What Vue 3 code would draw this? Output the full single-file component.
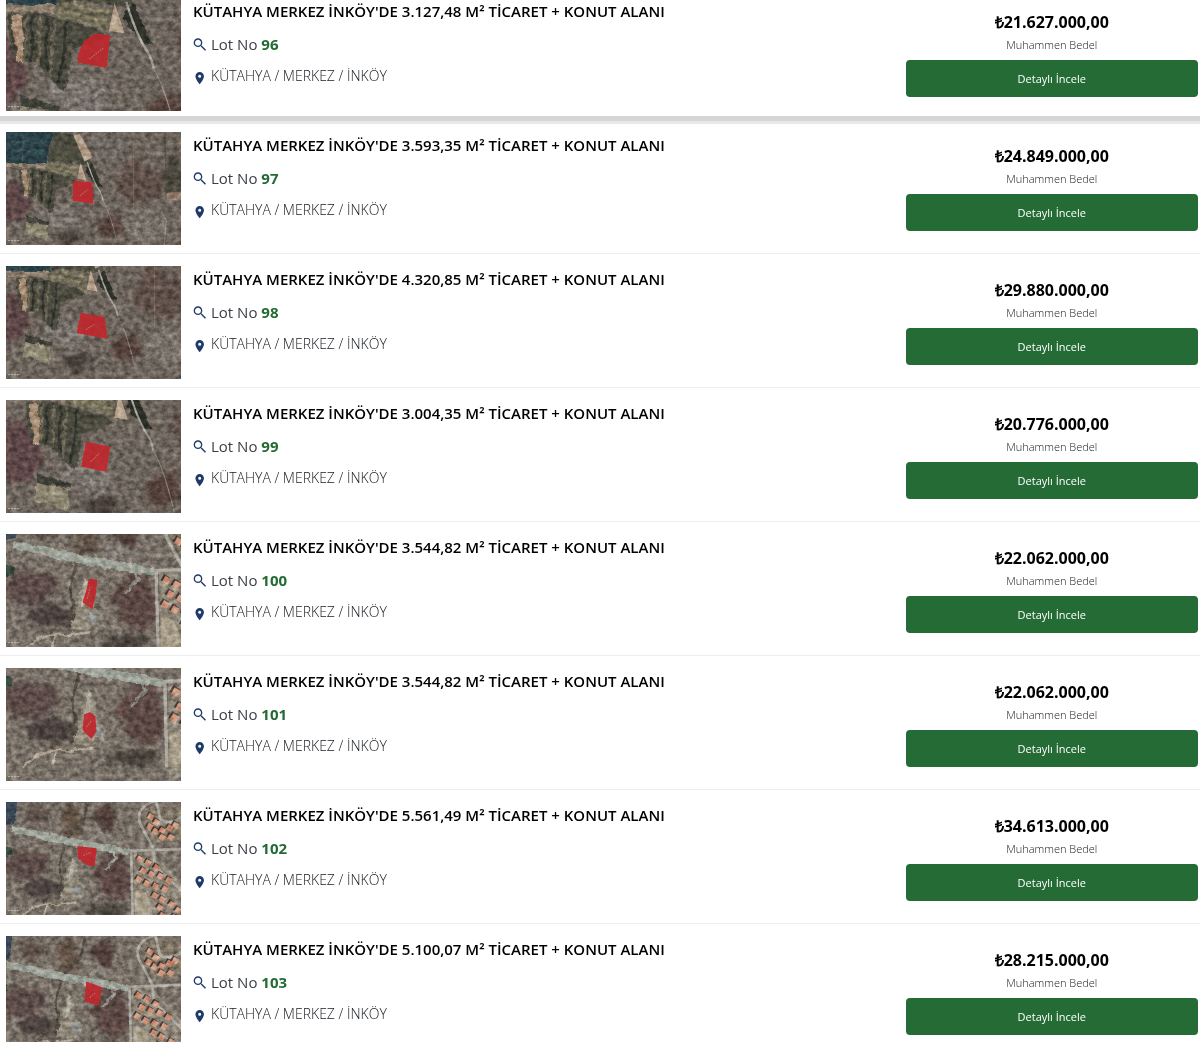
<template>
  <!-- Shared drawings for the lot thumbnails -->
  <svg class="defs" aria-hidden="true">
    <defs>
      <filter id="grain" x="0" y="0" width="100%" height="100%" color-interpolation-filters="sRGB">
        <feTurbulence type="fractalNoise" baseFrequency="0.06 0.07" numOctaves="5" seed="8" />
        <feColorMatrix values="0 0 0 0.5 0.26  0 0 0 0.5 0.26  0 0 0 0.5 0.25  0 0 0 0 1" />
      </filter>
      <filter id="rough" x="-10%" y="-10%" width="120%" height="120%" color-interpolation-filters="sRGB">
        <feTurbulence type="fractalNoise" baseFrequency="0.05" numOctaves="3" seed="3" result="n" />
        <feDisplacementMap in="SourceGraphic" in2="n" scale="14" xChannelSelector="R" yChannelSelector="G" />
        <feGaussianBlur stdDeviation="1" />
      </filter>
      <filter id="soft" x="-20%" y="-20%" width="140%" height="140%" color-interpolation-filters="sRGB">
        <feTurbulence type="fractalNoise" baseFrequency="0.02" numOctaves="4" seed="5" result="n" />
        <feGaussianBlur in="SourceGraphic" stdDeviation="6" result="b" />
        <feDisplacementMap in="b" in2="n" scale="50" xChannelSelector="R" yChannelSelector="G" />
      </filter>

      <g id="fields">
        <rect x="-200" y="-200" width="1000" height="800" fill="#6b635d" />
        <g filter="url(#soft)">
          <ellipse cx="20" cy="210" rx="50" ry="60" fill="#5c4648" />
          <ellipse cx="400" cy="150" rx="70" ry="60" fill="#5d4e49" />
          <ellipse cx="310" cy="285" rx="45" ry="30" fill="#54413c" />
          <ellipse cx="190" cy="315" rx="40" ry="22" fill="#463d39" />
          <ellipse cx="415" cy="280" rx="60" ry="45" fill="#77706b" />
          <ellipse cx="500" cy="130" rx="30" ry="60" fill="#49453c" />
          <ellipse cx="160" cy="245" rx="55" ry="35" fill="#77716d" />
          <ellipse cx="310" cy="35" rx="50" ry="35" fill="#6c6662" />
        </g>
        <g filter="url(#rough)">
          <path d="M-10 -10H145L122 95L-10 92Z" fill="#2a4047" />
          <path d="M20 30H125M15 55H120M50 0V90" stroke="#3b5057" stroke-width="5" />
          <path d="M-10 92L122 94L120 108L-10 108Z" fill="#8a7b6d" />
          <path d="M145 0L200 8L258 92L225 98L205 90L125 92Z" fill="#4b4b40" />
          <path d="M125 92L215 100L218 142L120 112Z" fill="#6f6a58" />
          <path d="M130 105L210 122M150 95L215 108" stroke="#827a65" stroke-width="4" />
          <path d="M40 110L120 113L215 148L150 175L138 245L112 225L90 192L45 188Z" fill="#4a493f" />
          <path d="M70 112V190M95 115V200M122 120L112 225" stroke="#666153" stroke-width="5" />
          <path d="M82 115V190M108 118V208M140 125L130 230" stroke="#30332d" stroke-width="6" />
          <path d="M48 112L64 112L68 192L56 192Z" fill="#a48a75" />
          <path d="M64 253L130 268L128 280L62 266Z" fill="#3d3f38" />
          <path d="M62 266L126 283L122 324L56 302Z" fill="#8a8471" />
          <path d="M256 90L290 165L272 160L238 118Z" fill="#2d3029" />
        </g>
        <path d="M203 12L222 6L260 74L236 88Z" fill="#ab9784" />
        <path d="M224 92L241 144L214 140Z" fill="#b5a18d" />
        <path d="M244 90Q262 150 282 178Q288 188 291 205" fill="none" stroke="#a39e98" stroke-width="4" />
        <path d="M291 205Q312 240 332 325" fill="none" stroke="#8b857f" stroke-width="2" />
        <path d="M382 0V250" fill="none" stroke="#8c7560" stroke-width="3" opacity="0.5" />
        <path d="M475 0L482 170L525 176" fill="none" stroke="#4a4840" stroke-width="5" opacity="0.7" />
        <path d="M474 338L480 265L466 240" fill="none" stroke="#a29d95" stroke-width="4" opacity="0.6" />
        <path d="M480 182L530 178V202L482 205Z" fill="#8f786a" />
      </g>

      <g id="hills">
        <rect x="-200" y="-200" width="1000" height="800" fill="#766e67" />
        <g filter="url(#soft)">
          <ellipse cx="60" cy="190" rx="65" ry="45" fill="#5b4b49" />
          <ellipse cx="325" cy="220" rx="52" ry="75" fill="#5a4744" />
          <ellipse cx="115" cy="262" rx="60" ry="30" fill="#4b413f" />
          <ellipse cx="300" cy="45" rx="28" ry="38" fill="#503f3c" />
          <ellipse cx="195" cy="55" rx="28" ry="50" fill="#615146" />
          <ellipse cx="100" cy="40" rx="40" ry="25" fill="#5d504b" />
          <ellipse cx="300" cy="325" rx="60" ry="20" fill="#46403b" />
          <ellipse cx="285" cy="100" rx="45" ry="16" fill="#837c77" />
        </g>
        <g filter="url(#rough)">
          <path d="M-10 -10H35L28 65L-10 75Z" fill="#374352" />
          <path d="M-10 130L20 135L20 160L-10 165Z" fill="#34443b" />
          <path d="M240 0Q250 60 185 105Q150 200 170 230Q160 270 110 300" fill="none" stroke="#524d46" stroke-width="8" />
          <path d="M130 40Q150 120 145 150L160 180" fill="none" stroke="#8c837a" stroke-width="6" opacity="0.7" />
          <path d="M198 165L214 190L216 235L240 255L228 290L160 295L175 255L184 195Z" fill="#8f877b" />
          <path d="M198 165L206 190L200 230L188 240L190 195Z" fill="#aaa69b" />
          <path d="M205 240L238 258L222 285L198 268Z" fill="#858584" />
          <path d="M320 145L330 165L298 205" fill="none" stroke="#8a8984" stroke-width="7" />
          <path d="M45 345Q85 300 150 308L210 300M122 308L115 338" fill="none" stroke="#b0a494" stroke-width="6" />
          <path d="M20 72L190 108L372 143L372 158L270 142L160 122L20 88Z" fill="#9ca199" stroke="#9ca199" stroke-width="3" />
        </g>
        <path d="M382 148L440 148L530 250V400H385Z" fill="#8a8277" />
        <path d="M386 265Q430 250 440 345H386Z" fill="#a59a88" />
        <path d="M410 30Q420 8 480 8L525 15V110L450 125Q425 80 410 60Z" fill="#7f7568" />
        <path d="M530 140L375 146L380 345M442 148L446 190L535 275" fill="none" stroke="#aaa69f" stroke-width="8" />
        <path d="M452 -5Q385 15 402 65L442 140M450 -5L462 50Q490 75 530 40" fill="none" stroke="#a8a49d" stroke-width="8" />
        <g v-for="(h, i) in houses" :key="i">
          <rect :x="h[0]" :y="h[1]" width="18" height="17" fill="#403b38" :transform="`rotate(32 ${h[0]} ${h[1]})`" />
          <rect :x="h[0] + 5" :y="h[1] + 2" width="17" height="17" fill="#cb917b" :transform="`rotate(32 ${h[0]} ${h[1]})`" />
        </g>
      </g>
    </defs>
  </svg>

  <main class="lots">
    <article v-for="lot in lots" :key="lot.no" class="lot" :class="{ 'lot--edge': lot.edge }">
      <svg class="thumb" viewBox="0 0 525 338" preserveAspectRatio="xMidYMid slice" role="img" :aria-label="`Lot ${lot.no}`">
        <use :href="`#${lot.scene}`" :transform="lot.view" />
        <rect class="grain" width="525" height="338" filter="url(#grain)" />
        <path :d="lot.parcel" fill="#c2242a" fill-opacity="0.88" stroke="#cf2328" stroke-width="3" />
        <path :d="lot.mark" stroke="#bd7468" stroke-width="3" stroke-dasharray="5 3" />
        <path d="M6 325H44" stroke="#c9c6c2" stroke-width="4" stroke-dasharray="7 2" opacity="0.7" />
      </svg>

      <div class="info">
        <h2>KÜTAHYA MERKEZ İNKÖY'DE {{ lot.area }} M² TİCARET + KONUT ALANI</h2>
        <p class="number">
          <svg class="icon" viewBox="2 1 21 21" aria-hidden="true">
            <path d="M9.5 3A6.5 6.5 0 0 1 16 9.5c0 1.61-.59 3.09-1.56 4.23l.27.27h.79l6 6-1.5 1.5-6-6v-.79l-.27-.27A6.516 6.516 0 0 1 9.5 16a6.5 6.5 0 0 1 0-13m0 2C7 5 5 7 5 9.5S7 14 9.5 14 14 12 14 9.5 12 5 9.5 5" />
          </svg>
          <span>Lot No <strong>{{ lot.no }}</strong></span>
        </p>
        <p class="place">
          <svg class="icon" viewBox="1 -3 23 23" aria-hidden="true">
            <path d="M12 11.5a2.5 2.5 0 0 1 0-5 2.5 2.5 0 0 1 0 5M12 2a7 7 0 0 0-7 7c0 5.25 7 13 7 13s7-7.75 7-13a7 7 0 0 0-7-7" />
          </svg>
          <span>KÜTAHYA / MERKEZ / İNKÖY</span>
        </p>
      </div>

      <div class="offer">
        <p class="price">₺{{ lot.price }}</p>
        <p class="caption">Muhammen Bedel</p>
        <a class="detail" href="#">Detaylı İncele</a>
      </div>
    </article>
  </main>
</template>

<script setup>
const lots = [
  {
    no: 96, area: "3.127,48", price: "21.627.000,00", edge: true, scene: "fields",
    view: "translate(-64 -145) scale(1.74)",
    parcel: "M216 190L223 155L238 128L270 108L310 114L300 207L262 200Z",
    mark: "M250 183L292 150",
  },
  {
    no: 97, area: "3.593,35", price: "24.849.000,00", scene: "fields",
    view: "translate(0 0)",
    parcel: "M204 148L257 152L260 213L202 204Z",
    mark: "M222 190L244 174",
  },
  {
    no: 98, area: "4.320,85", price: "29.880.000,00", scene: "fields",
    view: "translate(-17 -98) scale(1.21)",
    parcel: "M226 142L294 154L302 216L214 199Z",
    mark: "M240 190L266 174",
  },
  {
    no: 99, area: "3.004,35", price: "20.776.000,00", scene: "fields",
    view: "translate(-1 -160) scale(1.52)",
    parcel: "M242 127L310 141L300 213L228 198Z",
    mark: "M254 184L280 160",
  },
  {
    no: 100, area: "3.544,82", price: "22.062.000,00", scene: "hills",
    view: "translate(0 -66) scale(1.2)",
    parcel: "M250 136L272 138L268 178L258 222L232 204L244 164Z",
    mark: "M244 194L252 160",
  },
  {
    no: 101, area: "3.544,82", price: "22.062.000,00", scene: "hills",
    view: "translate(-8 -148) scale(1.29)",
    parcel: "M236 140L252 134L266 146L270 188L256 210L232 184Z",
    mark: "M242 176L256 158",
  },
  {
    no: 102, area: "5.561,49", price: "34.613.000,00", scene: "hills",
    view: "translate(0 0)",
    parcel: "M216 134L270 140L264 190L246 188L218 168Z",
    mark: "M232 160L256 150",
  },
  {
    no: 103, area: "5.100,07", price: "28.215.000,00", scene: "hills",
    view: "translate(-16 2) scale(1.03)",
    parcel: "M242 138L286 154L276 206L238 194Z",
    mark: "M252 184L270 168",
  },
];

// Top-left corners of the roofs in the housing estate
const houses = [
  [428, 28], [445, 45], [425, 58], [442, 72], [462, 70], [485, 62], [502, 54], [462, 90], [488, 90],
  [395, 155], [420, 166], [445, 180], [405, 190], [430, 200], [457, 206], [482, 218],
  [392, 215], [416, 228], [442, 236], [470, 245], [440, 264], [462, 275], [490, 290], [510, 308],
  [455, 300], [462, 324], [498, 330],
];
</script>

<style>
body {
  margin: 0;
  background: #fff;
  overflow: hidden;
}
</style>

<style scoped>
.defs {
  position: absolute;
  width: 0;
  height: 0;
}

.lots {
  height: 100vh;
  overflow: hidden;
  font-family: "Open Sans", "Liberation Sans", sans-serif;
  color: #3a3f45;
}

.lot {
  position: relative;
  display: flex;
  align-items: flex-start;
  padding: 12px 0 8px 6px;
  border-bottom: 1px solid #eee;
}

/* the list is scrolled slightly past its first row */
.lot:first-child {
  margin-top: -14px;
}

.lot--edge::after {
  content: "";
  position: absolute;
  left: 0;
  right: 0;
  bottom: -5px;
  height: 5px;
  border-bottom: 3px solid #e8e8e8;
  background: #d5d5d5;
}

.thumb {
  flex: none;
  width: 175px;
  height: 113px;
}

.grain {
  mix-blend-mode: overlay;
}

.info {
  flex: 1;
  min-width: 0;
  padding: 1px 0 0 12px;
}

h2,
p {
  margin: 0;
}

h2 {
  font-size: 15px;
  line-height: 24px;
  font-weight: 600;
  color: #000;
}

.number,
.place {
  display: flex;
  align-items: center;
  gap: 4px;
  margin-top: 8px;
  line-height: 24px;
}

.number {
  margin-top: 9px;
  font-size: 15px;
}

.number strong {
  font-weight: 700;
  color: #246a34;
}

.place {
  font-size: 14px;
  font-weight: 300;
  color: #14181d;
}

.icon {
  width: 14px;
  height: 14px;
  fill: #1f3a68;
  overflow: visible;
}

.offer {
  box-sizing: border-box;
  width: 25%;
  padding: 12px 2px 0 4px;
  text-align: center;
}

.price {
  font-size: 16px;
  line-height: 24px;
  font-weight: 700;
  color: #000;
}

.caption {
  margin-top: 3px;
  font-size: 11px;
  font-weight: 300;
  line-height: 16px;
  color: #14181d;
}

.detail {
  display: block;
  margin-top: 7px;
  border-radius: 4px;
  background: #256b35;
  color: #fff;
  font-size: 11px;
  line-height: 37px;
  text-decoration: none;
}
</style>
